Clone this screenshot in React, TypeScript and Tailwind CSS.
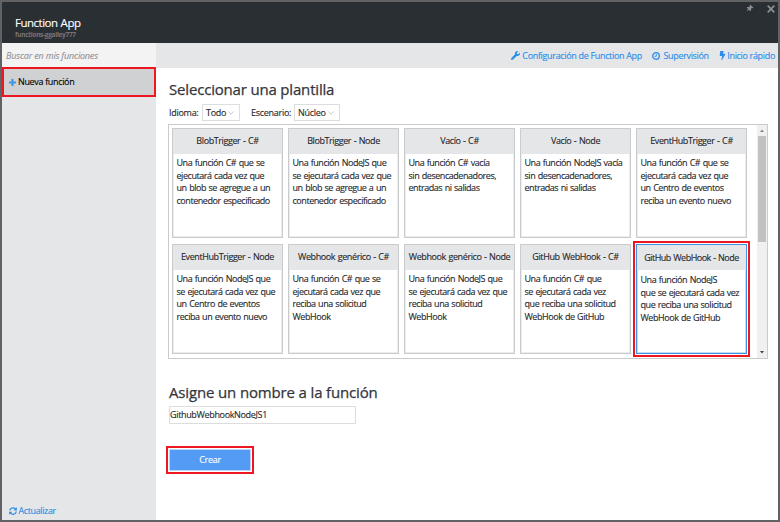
import React from 'react';
import { FaWrench, FaBolt, FaThumbtack, FaSyncAlt } from 'react-icons/fa';

type Template = { title: string; lines: string[]; selected?: boolean };

const templates: Template[] = [
  { title: 'BlobTrigger - C#', lines: ['Una función C# que se', 'ejecutará cada vez que', 'un blob se agregue a un', 'contenedor especificado'] },
  { title: 'BlobTrigger - Node', lines: ['Una función NodeJS que', 'se ejecutará cada vez que', 'un blob se agregue a un', 'contenedor especificado'] },
  { title: 'Vacío - C#', lines: ['Una función C# vacía', 'sin desencadenadores,', 'entradas ni salidas'] },
  { title: 'Vacío - Node', lines: ['Una función NodeJS vacía', 'sin desencadenadores,', 'entradas ni salidas'] },
  { title: 'EventHubTrigger - C#', lines: ['Una función C# que se', 'ejecutará cada vez que', 'un Centro de eventos', 'reciba un evento nuevo'] },
  { title: 'EventHubTrigger - Node', lines: ['Una función NodeJS que', 'se ejecutará cada vez que', 'un Centro de eventos', 'reciba un evento nuevo'] },
  { title: 'Webhook genérico - C#', lines: ['Una función C# que se', 'ejecutará cada vez que', 'reciba una solicitud', 'WebHook'] },
  { title: 'Webhook genérico - Node', lines: ['Una función NodeJS que', 'se ejecutará cada vez que', 'reciba una solicitud', 'WebHook'] },
  { title: 'GitHub WebHook - C#', lines: ['Una función C# que', 'se ejecutará cada vez', 'que reciba una solicitud', 'WebHook de GitHub'] },
  { title: 'GitHub WebHook - Node', lines: ['Una función NodeJS', 'que se ejecutará cada vez', 'que reciba una solicitud', 'WebHook de GitHub'], selected: true },
];

function Card({ title, lines, selected }: Template) {
  return (
    <div className={`relative h-[110px] w-[111px] border bg-white ${selected ? 'border-[#3c92e4] shadow-[inset_0_0_0_1px_#c4dcf3]' : 'border-[#c9cbcd] shadow-[inset_0_0_0_1px_#ececed]'}`}>
      {selected && <div className="absolute -top-[4px] -right-[4px] -bottom-[4px] -left-[4px] border-2 border-[#ee1620]" />}
      <div className={`flex h-[25px] items-center justify-center bg-[#e5e6e8] text-[9px] [word-spacing:0.6px] ${selected ? 'tracking-[-0.5px]' : 'tracking-[-0.4px]'}`}>
        <span className={selected ? 'pt-[1px]' : '-mt-px'}>{title}</span>
      </div>
      <div className={`pl-[3.5px] text-[9px] leading-[12.7px] tracking-[-0.45px] [word-spacing:0.6px] ${selected ? 'pt-[4px]' : 'pt-[3px]'}`}>
        {lines.map((l) => <div key={l}>{l}</div>)}
      </div>
    </div>
  );
}

function Select({ label, width }: { label: string; width: string }) {
  return (
    <div className={`flex h-[17px] items-center justify-between border border-[#dcdddf] pr-[5px] pl-[3px] ${width}`}>
      <span>{label}</span>
      <svg width="6" height="4" viewBox="0 0 6 4" fill="none" stroke="#c8cacc" strokeWidth="1"><path d="M0.5 0.5 L3 3.2 L5.5 0.5" /></svg>
    </div>
  );
}

export default function App() {
  return (
    <div className="flex h-[522px] w-[780px] flex-col overflow-hidden border-2 border-[#616264] bg-white font-['Open_Sans','Noto_Sans',sans-serif] font-medium whitespace-nowrap text-[#26272c] [-webkit-text-stroke:0.12px]">
      <header className="flex h-[41px] shrink-0 justify-between bg-[#2a2f33]">
        <div className="pt-[13px] pl-[13px]">
          <div className="text-[11.5px] leading-[16px] tracking-[-0.5px] text-white [word-spacing:0.6px]">Function App</div>
          <div className="text-[6.5px] leading-[8px] font-bold tracking-[-0.3px] text-[#7b7378] [-webkit-text-stroke:0]">functions-ggailey777</div>
        </div>
        <div className="flex gap-[14px] pt-[1px] pr-[3px] text-[#8b8d90]">
          <FaThumbtack className="mt-[2px] size-[7px] rotate-45" />
          <svg width="8" height="8" viewBox="0 0 8 8" className="mt-[2px]" stroke="currentColor" strokeWidth="1.8"><path d="M0.7 0.7 L7.3 7.3 M7.3 0.7 L0.7 7.3" /></svg>
        </div>
      </header>
      <div className="flex min-h-0 flex-1">
        <aside className="flex w-[154px] shrink-0 flex-col bg-[#e5e6e8]">
          <div className="h-[24px] bg-[#f3f3f4] pl-[4px] text-[9px] leading-[25px] font-normal tracking-[-0.18px] text-[#909296] italic">Buscar en mis funciones</div>
          <div className="flex h-[30px] items-center gap-[2px] border-2 border-[#ee1620] bg-[#d0d1d3] pl-[5px] text-[9px] tracking-[-0.34px] text-black">
            <svg width="7" height="7" viewBox="0 0 7 7" fill="#3e96ee"><path d="M2.4 0h2.2v2.4H7v2.2H4.6V7H2.4V4.6H0V2.4h2.4z" /></svg>
            <span>Nueva función</span>
          </div>
          <div className="mt-auto mb-[3px] flex items-center gap-[2px] pl-[6.5px] text-[9px] leading-[12px] tracking-[-0.38px] text-[#2f8de4]">
            <FaSyncAlt className="size-[8px]" />
            <span>Actualizar</span>
          </div>
        </aside>
        <main className="flex-1">
          <nav className="flex h-[25px] items-center justify-end gap-[10.5px] bg-[#e5e6e8] pr-[3px] text-[9px] tracking-[-0.33px] text-[#2a8deb]">
            <span className="flex items-center gap-[2px]"><FaWrench className="size-[9px]" />Configuración de Function App</span>
            <span className="flex items-center gap-[3px]">
              <svg width="8" height="8" viewBox="0 0 8 8" fill="none" stroke="currentColor"><circle cx="4" cy="4" r="3.3" strokeWidth="1.3" /><path d="M4.3 2v2.3H2.6" strokeWidth="0.9" /></svg>
              Supervisión
            </span>
            <span className="flex items-center gap-px">
              <FaBolt className="h-[9px] w-[7px]" />Inicio rápido
            </span>
          </nav>
          <section className="pl-[12px]">
            <h1 className="mt-[11px] pl-[1px] text-[15px] leading-[20px] tracking-[-0.18px] text-[#34353a] [-webkit-text-stroke:0.25px]">Seleccionar una plantilla</h1>
            <div className="mt-[5px] flex items-center pl-[1px] text-[9px] leading-[12px] tracking-[-0.28px]">
              <span className="w-[33px]">Idioma:</span>
              <Select label="Todo" width="w-[38px]" />
              <span className="ml-[11px] w-[43px]">Escenario:</span>
              <Select label="Núcleo" width="w-[46px]" />
            </div>
            <div className="mt-[3px] flex h-[235px] w-[600px] justify-between border border-[#c9cbcd]">
              <div className="grid grid-cols-[repeat(5,111px)] content-start gap-x-[5px] gap-y-[6px] pt-[3px] pl-[3px]">
                {templates.map((t) => <Card key={t.title} {...t} />)}
              </div>
              <div className="flex w-[10px] flex-col items-center justify-between bg-[#f0f0f0]">
                <svg width="10" height="11" viewBox="0 0 10 11"><path d="M3 7 L5 4.5 L7 7Z" fill="#858585" /></svg>
                <div className="mb-auto h-[106px] w-[8px] bg-[#c1c1c1]" />
                <svg width="10" height="10" viewBox="0 0 10 10"><path d="M3 3 L5 5.5 L7 3Z" fill="#404040" /></svg>
              </div>
            </div>
            <h1 className="mt-[23px] pl-[1px] text-[15px] leading-[20px] tracking-[-0.15px] text-[#34353a] [-webkit-text-stroke:0.25px]">Asigne un nombre a la función</h1>
            <div className="mt-[4px] ml-[1px] h-[18px] w-[187px] border border-[#dcdddf] text-[9px] leading-[16px] tracking-[-0.34px]">GithubWebhookNodeJS1</div>
            <div className="mt-[22px] -ml-[2px] h-[28px] w-[88px] border-2 border-[#ee1620] p-px">
              <div className="h-full border border-[#bcd8fa] bg-[#549bf5] text-center text-[9px] leading-[20px] tracking-[-0.3px] text-white">Crear</div>
            </div>
          </section>
        </main>
      </div>
    </div>
  );
}
